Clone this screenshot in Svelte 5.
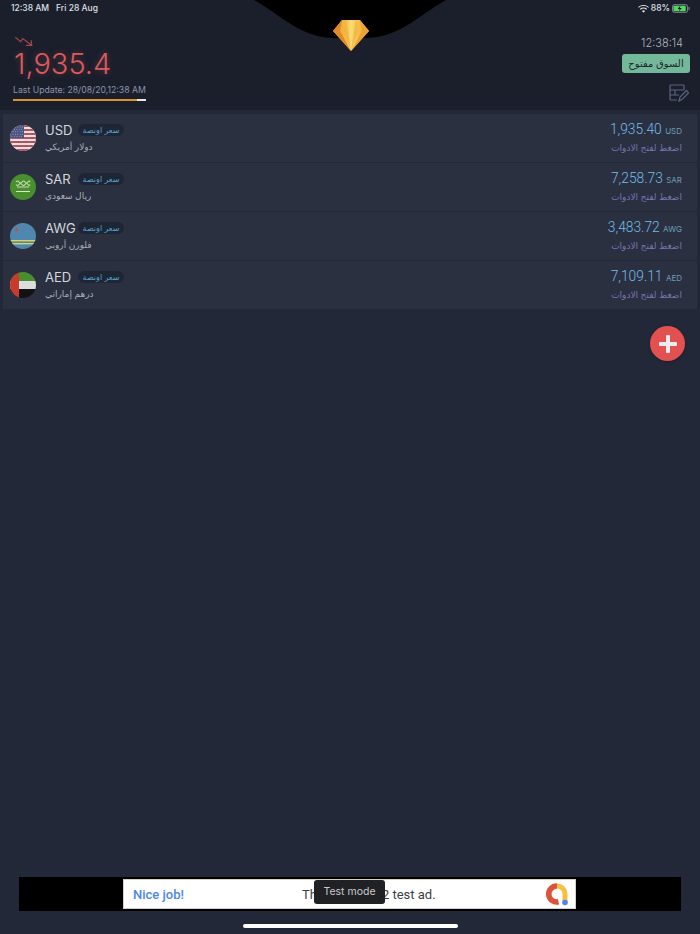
<script>
  const rows = [
    { code: 'USD', name: 'دولار أمريكي', price: '1,935.40', flag: 'us' },
    { code: 'SAR', name: 'ريال سعودي', price: '7,258.73', flag: 'sa' },
    { code: 'AWG', name: 'فلورن أروبي', price: '3,483.72', flag: 'aw' },
    { code: 'AED', name: 'درهم إماراتي', price: '7,109.11', flag: 'ae' }
  ];
  const stars = [];
  for (let y = 2; y < 12; y += 2.4) {
    for (let x = 2 + (Math.round(y) % 4 ? 1 : 0); x < 14; x += 2.4) stars.push({ x, y });
  }
</script>

<div class="page">
  <svg class="notch" viewBox="0 0 200 40" width="200" height="40" aria-hidden="true">
    <path d="M4 0 C30 14 50 38 85 38 L115 38 C150 38 170 14 196 0 Z" fill="#000" />
  </svg>
  <svg class="gem" viewBox="0 0 36 32" width="36" height="32" aria-hidden="true">
    <defs>
      <linearGradient id="gemc" x1="0" x2="1" y1="0" y2="0">
        <stop offset="0" stop-color="#e8952c" />
        <stop offset="0.35" stop-color="#f5bb45" />
        <stop offset="0.5" stop-color="#fbdc78" />
        <stop offset="0.7" stop-color="#f5c04c" />
        <stop offset="1" stop-color="#e99a2f" />
      </linearGradient>
    </defs>
    <path d="M9 1 H27 L36 12 L18 32 L0 12 Z" fill="url(#gemc)" />
    <path d="M9 1 L0 12 L18 32 L7 12 Z" fill="#e28a26" />
    <path d="M27 1 L36 12 L18 32 L29 12 Z" fill="#eda335" />
    <path d="M13 1 L11 12 L18 32 L15 12 Z" fill="#f3b03c" opacity=".7" />
    <path d="M23 1 L25 12 L18 32 L21 12 Z" fill="#f3b03c" opacity=".7" />
  </svg>

  <header class="head">
    <div class="status">
      <span class="status-left"><span>12:38 AM</span><span>Fri 28 Aug</span></span>
      <span class="status-right">
        <svg viewBox="0 0 12 9" width="11" height="8" aria-hidden="true">
          <path d="M6 8.6 4.3 6.8a2.5 2.5 0 0 1 3.4 0Z M2.9 5.4a4.5 4.5 0 0 1 6.2 0l1-1a6 6 0 0 0-8.2 0Z M.6 3.1a7.7 7.7 0 0 1 10.8 0l.6-.8a8.8 8.8 0 0 0-12 0Z" fill="#e8e8ea" />
        </svg>
        <span>88%</span>
        <svg viewBox="0 0 19 9" width="18" height="9" aria-hidden="true">
          <rect x=".5" y=".5" width="16" height="8" rx="2" fill="none" stroke="#8b8f97" />
          <rect x="1.5" y="1.5" width="13" height="6" rx="1" fill="#4cd964" />
          <path d="M8.8 1.6 6 5h2l-.6 2.5L10.4 4h-2Z" fill="#111" />
          <rect x="17.5" y="3" width="1" height="3" fill="#8b8f97" />
        </svg>
      </span>
    </div>
    <div class="head-main">
      <div class="quote">
        <svg class="trend" viewBox="0 0 18 11" width="18" height="11" aria-hidden="true">
          <path d="M.3 1.2 5.7 5.6 7.7 2.6 16 8.7M16 4.2 16.8 9.3H11" fill="none" stroke="#a9444a" stroke-width="1.2" />
        </svg>
        <div class="big">1,935.4</div>
        <div class="update">Last Update: 28/08/20,12:38 AM</div>
        <div class="progress"><span></span></div>
      </div>
      <div class="side">
        <div class="clock">12:38:14</div>
        <div class="open" dir="rtl">السوق مفتوح</div>
        <svg class="edit" viewBox="0 0 20 18" width="20" height="18" aria-hidden="true">
          <path d="M15 6V2a1 1 0 0 0-1-1H2a1 1 0 0 0-1 1v13a1 1 0 0 0 1 1h6M1 6h14M1 11h9M6 6v5" fill="none" stroke="#5b6480" stroke-width="1.2" />
          <path d="M10 17l1-4 6.5-6.5 2 2.5-6 6Z" fill="none" stroke="#5b6480" stroke-width="1.2" />
        </svg>
      </div>
    </div>
  </header>

  <main class="list">
    {#each rows as r}
      <div class="row">
        <svg class="flag" viewBox="0 0 26 26" width="26" height="26" aria-hidden="true">
          <defs><clipPath id={'c' + r.flag}><circle cx="13" cy="13" r="13" /></clipPath></defs>
          <g clip-path={'url(#c' + r.flag + ')'}>
            {#if r.flag === 'us'}
              <rect width="26" height="26" fill="#e4e4e8" />
              {#each [0, 4, 8, 12, 16, 20, 24] as y}
                <rect y={y} width="26" height="2" fill="#b8505c" />
              {/each}
              <rect width="14" height="13" fill="#4a5482" />
              {#each stars as s}
                <circle cx={s.x} cy={s.y} r=".45" fill="#d8dae6" />
              {/each}
            {:else if r.flag === 'sa'}
              <rect width="26" height="26" fill="#4a8f2d" />
              <path d="M6 8q1.5-2 3 0t3 0 3 0 3 0 2 0M6 10.500q1.500 2 3 0t3 0 3 0 3 0 2 0M7 13h12" fill="none" stroke="#c4dcb8" stroke-width="1.100" />
              <rect x="6" y="17" width="14" height="1" fill="#d6e5cf" />
            {:else if r.flag === 'aw'}
              <rect width="26" height="26" fill="#4f87ae" />
              <rect y="17" width="26" height="1.4" fill="#dcd35a" />
              <rect y="20" width="26" height="1.4" fill="#dcd35a" />
              <path d="M6.5 3.5 7.3 6 9.5 6.500 7.3 7.3 6.500 10 5.700 7.300 3.500 6.500 5.700 6Z" fill="#c94c4c" />
            {:else}
              <rect width="26" height="9" fill="#4a8f2d" />
              <rect y="9" width="26" height="8" fill="#dcdcde" />
              <rect y="17" width="26" height="9" fill="#121214" />
              <rect width="9" height="26" fill="#c83a2c" />
            {/if}
          </g>
        </svg>
        <div class="info">
          <div class="line1">
            <span class="code">{r.code}</span>
            <span class="chip" dir="rtl">سعر اونصة</span>
          </div>
          <div class="name" dir="rtl">{r.name}</div>
        </div>
        <div class="values">
          <div class="price">{r.price} <small>{r.code}</small></div>
          <div class="hint" dir="rtl">اضغط لفتح الادوات</div>
        </div>
      </div>
    {/each}
  </main>

  <div class="fab-wrap">
    <button class="fab" aria-label="add">
      <svg viewBox="0 0 18 18" width="18" height="18" aria-hidden="true">
        <path d="M9 1.500v15M1.500 9h15" stroke="#ececec" stroke-width="4" stroke-linecap="round" />
      </svg>
    </button>
  </div>

  <div class="spacer"></div>

  <div class="ad">
    <div class="banner">
      <span class="nice">Nice job!</span>
      <span class="adtext">Th<span class="hidden-part">is is a 320x3</span>2 test ad.</span>
      <svg class="adlogo" viewBox="0 0 24 24" width="24" height="24" aria-hidden="true">
        <path d="M13.500 19.800A8 8 0 1 1 12 4" fill="none" stroke="#dd5239" stroke-width="5.500" />
        <path d="M12 4A8 8 0 0 1 20 12V20" fill="none" stroke="#f6bf41" stroke-width="5" />
        <circle cx="20" cy="20.500" r="2.800" fill="#4b84ee" />
      </svg>
    </div>
    <div class="test">Test mode</div>
  </div>
  <div class="home"><span></span></div>
</div>

<style>
  :global(body) {
    margin: 0;
    background: #222838;
  }
  .page {
    position: relative;
    width: 700px;
    height: 934px;
    display: flex;
    flex-direction: column;
    overflow: hidden;
    background: #222838;
    font-family: Inter, "DejaVu Sans", sans-serif;
    color: #d6d8de;
  }
  .notch {
    position: absolute;
    left: 250px;
    top: 0;
  }
  .gem {
    position: absolute;
    left: 333px;
    top: 19px;
  }
  .head {
    height: 110px;
    flex: none;
    box-sizing: border-box;
    background: #1a1f2b;
    padding: 2px 10px 0 13px;
  }
  .status {
    display: flex;
    justify-content: space-between;
    font-size: 8.5px;
    font-weight: 500;
    line-height: 13px;
    color: #dfe0e4;
    margin-left: -2px;
  }
  .status-left {
    display: flex;
    gap: 7px;
  }
  .status-right {
    display: flex;
    align-items: center;
    gap: 2px;
  }
  .head-main {
    display: flex;
    justify-content: space-between;
  }
  .quote {
    width: 133px;
    padding-top: 21px;
  }
  .trend {
    display: block;
    margin-left: 2px;
  }
  .big {
    font-size: 29px;
    font-weight: 300;
    line-height: 36px;
    color: #dc5a5e;
    white-space: nowrap;
    margin-top: -1px;
    margin-left: 1px;
    text-shadow: 0 0 6px rgba(220, 90, 94, 0.35);
  }
  .update {
    font-size: 8.7px;
    line-height: 13px;
    color: #8d93ad;
    white-space: nowrap;
    margin-top: 2px;
  }
  .progress {
    height: 2px;
    margin-top: 2px;
    background: #e8e8e8;
  }
  .progress span {
    display: block;
    width: 124px;
    height: 2px;
    background: #d8922f;
  }
  .side {
    display: flex;
    flex-direction: column;
    align-items: flex-end;
    padding-top: 21px;
  }
  .clock {
    font-size: 11px;
    font-weight: 300;
    line-height: 15px;
    color: #b3b6bd;
    margin-right: 7px;
  }
  .open {
    margin-top: 3px;
    width: 68px;
    height: 19px;
    line-height: 18px;
    text-align: center;
    font-size: 10px;
    font-weight: 500;
    border-radius: 3px;
    background: #74b89c;
    color: #1c2a2a;
    white-space: nowrap;
  }
  .edit {
    margin-top: 11px;
    margin-right: 1px;
  }
  .list {
    flex: none;
    margin-top: 4px;
    padding: 0 3px;
    display: flex;
    flex-direction: column;
    gap: 1px;
  }
  .row {
    height: 48px;
    background: #2a3040;
    display: flex;
    align-items: center;
    padding: 0 15px 0 7px;
  }
  .flag {
    flex: none;
  }
  .info {
    margin-left: 9px;
    margin-bottom: 2px;
  }
  .line1 {
    display: flex;
    align-items: center;
    gap: 6px;
    height: 20px;
  }
  .code {
    width: 27px;
    font-size: 13px;
    line-height: 20px;
    color: #d4d7dd;
    white-space: nowrap;
  }
  .chip {
    box-sizing: border-box;
    width: 46px;
    text-align: center;
    font-size: 8px;
    height: 12px;
    line-height: 12px;
    border-radius: 6px;
    background: #1e2636;
    color: #5aa3cf;
    white-space: nowrap;
  }
  .name {
    font-size: 9px;
    line-height: 14px;
    color: #a8acb6;
    text-align: left;
  }
  .values {
    margin-left: auto;
    margin-bottom: 2px;
    text-align: right;
  }
  .price {
    font-family: Roboto, Inter, sans-serif;
    font-size: 13.8px;
    font-weight: 300;
    line-height: 20px;
    color: #74bcec;
    font-variant-numeric: tabular-nums;
  }
  .price small {
    font-family: Inter, sans-serif;
    font-size: 8px;
    font-weight: 400;
    color: #6d9cbc;
  }
  .hint {
    font-size: 9px;
    line-height: 14px;
    color: #7d72ae;
  }
  .fab-wrap {
    display: flex;
    justify-content: flex-end;
    padding: 17px 15px 0 0;
  }
  .fab {
    width: 35px;
    height: 35px;
    padding: 0;
    border: 0;
    border-radius: 50%;
    background: #e2504f;
    display: flex;
    align-items: center;
    justify-content: center;
    box-shadow: 0 1px 3px rgba(0, 0, 0, 0.25);
  }
  .spacer {
    flex: 1;
  }
  .ad {
    position: relative;
    flex: none;
    margin: 0 19px;
    height: 34px;
    background: #000;
    display: flex;
    justify-content: center;
    align-items: center;
  }
  .banner {
    position: relative;
    box-sizing: border-box;
    width: 453px;
    height: 30px;
    margin-left: -1px;
    background: #fff;
    display: flex;
    align-items: center;
    padding: 0 5px 0 9px;
    font-family: Roboto, Inter, sans-serif;
    font-size: 13px;
    color: #3c4043;
    border: 1px solid #d0d0d0;
  }
  .nice {
    font-weight: 500;
    color: #4e86ec;
  }
  .adtext {
    position: absolute;
    left: 178px;
    white-space: nowrap;
  }
  .hidden-part {
    letter-spacing: -0.550px;
  }
  .adlogo {
    margin-left: auto;
    margin-right: 1px;
    margin-top: -1px;
  }
  .test {
    position: absolute;
    left: 295px;
    top: 3px;
    width: 71px;
    height: 24px;
    line-height: 23px;
    text-align: center;
    font-size: 10.500px;
    border-radius: 3px;
    background: #202124;
    color: #c9cacc;
  }
  .home {
    flex: none;
    height: 23px;
    display: flex;
    justify-content: center;
    box-sizing: border-box;
  }
  .home span {
    width: 215px;
    height: 4px;
    margin-top: 13px;
    border-radius: 2px;
    background: #fff;
  }
</style>
